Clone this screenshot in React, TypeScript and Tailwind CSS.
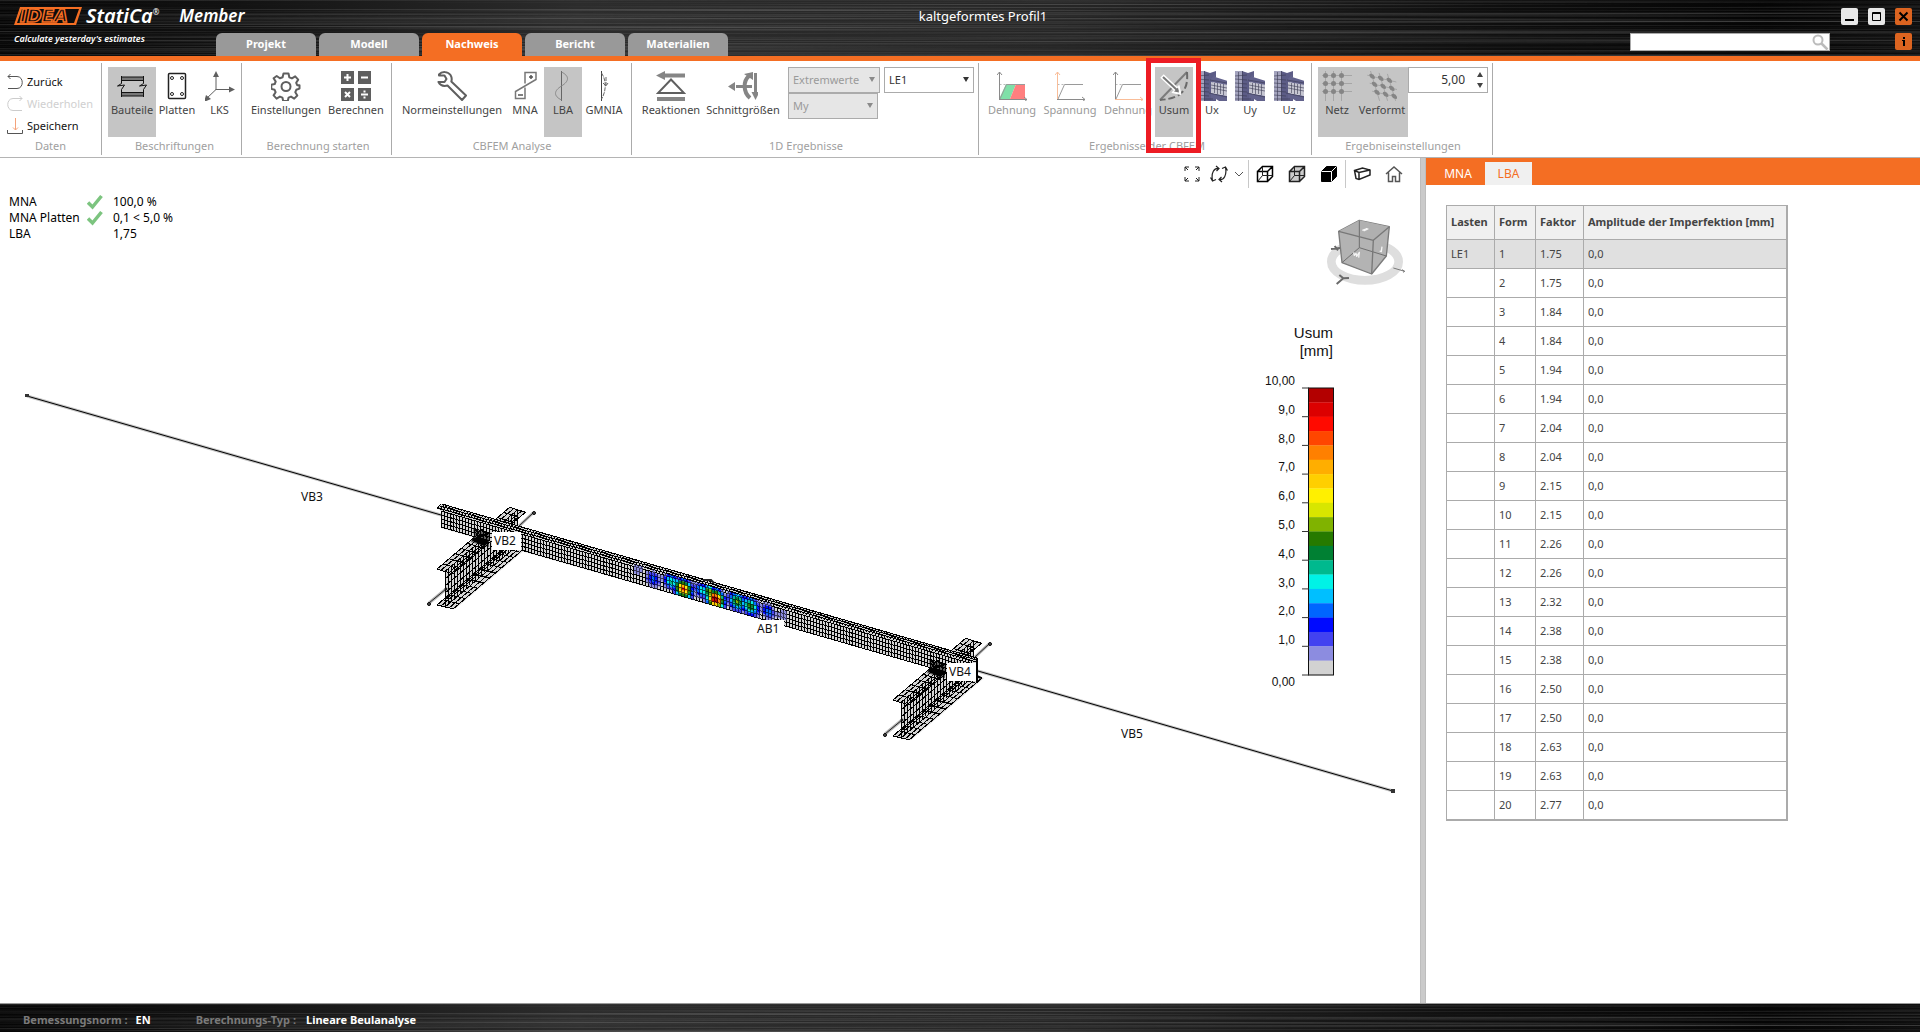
import React, { useState } from "react";

const tabs = ["Projekt", "Modell", "Nachweis", "Bericht", "Materialien"];

const palette = [
  "#b30000", "#dc0000", "#ff0a00", "#ff4600", "#ff8000", "#ffae00", "#ffcf00", "#fff000", "#d8e600", "#80b300",
  "#267a00", "#008033", "#00b98e", "#00f2e6", "#00bfff", "#0066ff", "#000aff", "#4242f0", "#8c8ce0", "#d2d2d2",
];

const ticks = ["10,00", "9,0", "8,0", "7,0", "6,0", "5,0", "4,0", "3,0", "2,0", "1,0", "0,00"];

const factors = [
  "1.75", "1.75", "1.84", "1.84", "1.94", "1.94", "2.04", "2.04", "2.15", "2.15",
  "2.26", "2.26", "2.32", "2.38", "2.38", "2.50", "2.50", "2.63", "2.63", "2.77",
];

// dark brushed metal behind the title and status bars
const Brushed = ({ id }: { id: string }) => (
  <svg aria-hidden="true" className="absolute inset-0 h-full w-full">
    <defs>
      <linearGradient id={`${id}-base`}>
        <stop offset="0" stopColor="#060606" />
        <stop offset="0.12" stopColor="#121212" />
        <stop offset="0.3" stopColor="#2c2c2c" />
        <stop offset="0.55" stopColor="#262626" />
        <stop offset="0.78" stopColor="#0e0e0e" />
        <stop offset="0.92" stopColor="#050505" />
        <stop offset="1" stopColor="#0e0e0e" />
      </linearGradient>
      <filter id={`${id}-grain`} x="0" y="0" width="100%" height="100%">
        <feTurbulence type="fractalNoise" baseFrequency="0.001 0.7" numOctaves="2" seed="4" />
        <feColorMatrix values="0 0 0 0 1  0 0 0 0 1  0 0 0 0 1  1.4 0 0 0 -0.6" />
      </filter>
    </defs>
    <rect width="100%" height="100%" fill={`url(#${id}-base)`} />
    <rect width="100%" height="100%" filter={`url(#${id}-grain)`} opacity="0.35" />
  </svg>
);

/* ---------- ribbon icons, all on a 30 x 30 grid ---------- */

const Icon = ({ children }: { children: React.ReactNode }) => (
  <svg width="30" height="30" viewBox="0 0 30 30" fill="none" stroke="#5f5f5f" className="shrink-0">
    {children}
  </svg>
);

const MemberIcon = () => (
  <Icon>
    <g stroke="#111">
      <path d="M4 7.500h23M4 23.500h23" stroke="#777" strokeWidth="3" />
      <path d="M4 6h23M4 9.500h23M4 21.500h23M4 25h23" />
      <path d="M4.500 5v7.500l-4 2.500 7-1-3 4.500V26M26.500 5v7.500l-4 2.500 7-1-3 4.500V26" />
    </g>
  </Icon>
);

const PlateIcon = () => (
  <Icon>
    <g stroke="#222">
      <rect x="6.500" y="2.500" width="17" height="25" rx="1" strokeWidth="1.500" fill="#fff" />
      {[[10, 7], [20, 7], [10, 23], [20, 23]].map(([x, y]) => (
        <circle key={`${x}-${y}`} cx={x} cy={y} r="1.500" />
      ))}
    </g>
  </Icon>
);

const AxesIcon = () => (
  <Icon>
    <path d="M11 19V3M11 18.500h18M11 18.500L1 28" />
    <path d="M11 0l3 6H8zM30 18.500l-6 3v-6zM-1 31l2-7 5 4z" fill="#5f5f5f" stroke="none" />
  </Icon>
);

const GearIcon = () => (
  <Icon>
    <path
      d="M12.500 2.500h5l.8 3.800 2.600 1.100 3.300-2.100 3 3.300-2 3.200 1 2.400h2.300v3.400l-3.200 1.200-1 2.400 2 3.300-3.100 3.100-3.200-2-2.400 1-.8 3.400h-4.600l-.8-3.400-2.500-1-3.300 2-3-3.200 2-3.200-1-2.400-3.300-.9v-4.100l3.400-.8 1-2.400-2.100-3.300L5.700 5l3.200 2.300 2.700-1.100z"
      strokeWidth="2"
      strokeLinejoin="round"
    />
    <circle cx="15" cy="15.500" r="4.500" strokeWidth="2" />
  </Icon>
);

const CalcIcon = () => (
  <Icon>
    <path d="M0 0h13v13H0zM17 0h13v13H17zM0 17h13v13H0zM17 17h13v13H17z" fill="#5f5f5f" stroke="none" />
    <path d="M3 6.500h7M6.500 3v7M20 6.500h7M4 21l5 5M9 21l-5 5M20 23.500h7M23.500 19.500v2M23.500 25.500v2" stroke="#fff" strokeWidth="2" />
  </Icon>
);

const WrenchIcon = () => (
  <Icon>
    <path
      d="M2 3.500C5 0 11 .5 13.500 4c1.500 2.500 1.500 4.500.8 6.500L29 24.500 25 29 10.500 14.500c-4 1-7.500-.5-9-3.500h6l2-3-2-3.500H2z"
      strokeWidth="2"
      strokeLinejoin="round"
    />
  </Icon>
);

const MnaIcon = () => (
  <Icon>
    <path d="M15 12.500v-11h11v7L5.500 20.500v7H15v-11" stroke="#777" strokeWidth="1.500" />
    <path d="M19 6h4M21 4v4M8 24h5" stroke="#555" strokeWidth="1.500" />
  </Icon>
);

const LbaIcon = () => (
  <Icon>
    <path d="M13.500 0v30" stroke="#666" />
    <path d="M13.500 1c8 4 8 9 0 14s-8 10 0 14" stroke="#8a8a8a" />
  </Icon>
);

const GmniaIcon = () => (
  <Icon>
    <path d="M12.500 0v30" stroke="#444" />
    <path d="M12.500 2c5 7 5 18 0 26M17 6v9M14 12l3 3 2-3" stroke="#666" strokeDasharray="4 1" />
  </Icon>
);

const ReactionIcon = () => (
  <Icon>
    <path d="M0 4.500L9 0v2.500h20v4H9V9zM1 26h28v4H1z" fill="#858585" stroke="none" />
    <path d="M15 8.500l13 13.500H2z" strokeWidth="2" />
  </Icon>
);

const ForcesIcon = () => (
  <Icon>
    <path d="M8 15.500h16M27.500 2v19" stroke="#858585" strokeWidth="3" />
    <path d="M22 27c-7-6-7-17-1-22" stroke="#858585" strokeWidth="4" />
    <path d="M0 15.500l7-4.500v9zM16 3l9-2v8zM23.500 21h8l-4 8z" fill="#858585" stroke="none" />
  </Icon>
);

const DiagramIcon = ({ fill, x, y }: { fill?: boolean; x: string; y: string }) => (
  <Icon>
    {fill && (
      <g stroke="none">
        <path d="M2 28L9 13h10l-6 15z" fill="#7fe0a8" />
        <path d="M13 28l6-15h9v15z" fill="#ff7f7f" />
      </g>
    )}
    <path d="M2.500 13.500H9" stroke="#bbb" strokeDasharray="2 2" />
    <path d="M3 28L9.500 13.500H28" stroke="#9a9a9a" />
    <path d="M2.500 29V1M0 4l2.500-3L5 4" stroke={y} />
    <path d="M2 28.500h28M27 26l3 2.500-3 2.500" stroke={x} />
  </Icon>
);

const UsumIcon = () => (
  <Icon>
    <path d="M1 29L28 1" stroke="#7c7c7c" strokeWidth="2" />
    <path d="M28 1c1 14-1 26-27 28" stroke="#6a6a6a" strokeWidth="2" strokeDasharray="7 3" />
    <path d="M3 5l16 15" stroke="#fff" strokeWidth="5" />
    <path d="M22 23.500l-9-2 7-7z" fill="#fff" stroke="#fff" />
    <path d="M4 6l15 14" stroke="#777" strokeWidth="2" />
    <path d="M20 21.500l-5-1 4-4z" fill="#777" stroke="none" />
  </Icon>
);

const MeshIcon = () => (
  <Icon>
    <path d="M0 0l8-1v31H0z" fill="#a3a3bd" stroke="none" />
    <path d="M7 0l6 2 6-2v6l-3 4v12l3 4v4H7z" fill="#5c5c86" stroke="none" />
    <path d="M14 8l5-6-1 4 13 4v5l-17-4zM14 22l17 3v5h-9l-3-2-5 2z" fill="#62628c" stroke="none" />
    <path d="M14 11l17 3v11l-17-3z" fill="#c6c6d2" stroke="none" />
    <path
      d="M0 5l12-1M0 8l12 1M0 12l12 1M0 16l12 1M0 20l12 1M0 24l12 1M0 28l16 0M3.500 1v29M7.500 0v30M17.500 12v10M20.500 12v11M23.500 13v10M26.500 13v11M14 14l16 3M14 17l16 3M13 9l17 3M12 22l18 4"
      stroke="#3b3b52"
      strokeWidth="0.600"
    />
  </Icon>
);

const NetIcon = ({ skew }: { skew?: boolean }) => (
  <Icon>
    <g transform={skew ? "skewX(17) skewY(14)" : undefined}>
      <path
        d={
          skew
            ? "M-1 4.500h27M-1 12.500h26M-1 20.500h26M3.500-1v30M11.500-1v28M19.500-2v27"
            : "M0 4.500h30M0 12.500h30M0 20.500h30M3.500 0v30M11.500 0v30M19.500 0v30"
        }
        stroke="#a6a6a6"
      />
      {[4.5, 12.5, 20.5].map((y) =>
        [3.5, 11.5, 19.5].map((x) => <circle key={`${x}-${y}`} cx={x} cy={y} r="2.500" fill="#858585" stroke="none" />)
      )}
    </g>
  </Icon>
);

/* ---------- ribbon building blocks ---------- */

interface ToolProps {
  label: string;
  width: string;
  icon: React.ReactNode;
  active?: boolean;
  faded?: boolean;
}

const Tool = ({ label, width, icon, active, faded }: ToolProps) => (
  <button
    className={`flex h-[70px] flex-col items-center pt-1 ${width} ${active ? "bg-[#c5c5c5]" : ""} ${
      faded ? "text-[#9a9a9a]" : "text-[#444]"
    }`}
  >
    {icon}
    <span className="whitespace-nowrap leading-[18px]">{label}</span>
  </button>
);

const Group = ({ label, pad, children }: { label: string; pad: string; children: React.ReactNode }) => (
  <section className={`my-0.5 flex shrink-0 flex-col border-r border-[#ababab] pt-1 ${pad}`}>
    <div className="flex h-[70px]">{children}</div>
    <div className="text-center leading-[18px] whitespace-nowrap text-[#a0a0a0]">{label}</div>
  </section>
);

const Choice = ({ label, value, width, disabled }: { label: string; value: string; width: string; disabled?: boolean }) => (
  <div className={`relative h-[26px] ${width}`}>
    <select
      aria-label={label}
      disabled={disabled}
      className={`h-full w-full appearance-none border border-[#ababab] pl-1 ${
        disabled ? "bg-[#e6e6e6] text-[#9a9a9a]" : "bg-white text-[#333]"
      }`}
    >
      <option>{value}</option>
    </select>
    <svg width="6" height="5" viewBox="0 0 6 5" className="pointer-events-none absolute top-[10px] right-[5px]">
      <path d="M0 0h6L3 5z" fill={disabled ? "#8a8a8a" : "#333"} />
    </svg>
  </div>
);

/* ---------- 3D model ---------- */

const beamTop = (x: number) => 504 + 0.288 * (x - 442);

// buckling waves of the web: x, depth below the top edge, height, spread
const waves = [
  [637, 8, 0.1, 5],
  [653, 14, 0.24, 6],
  [671, 11, 0.38, 6],
  [683, 15, 0.85, 7],
  [702, 11, 0.35, 6],
  [709, 10, 0.55, 5],
  [715, 16, 1.05, 7],
  [737, 12, 0.52, 7],
  [750, 13, 0.48, 7],
  [768, 13, 0.24, 6],
  [783, 13, 0.1, 5],
];

const buildCells = () => {
  const cells: { d: string; fill: string }[] = [];
  for (let x = 628; x < 792; x += 3) {
    for (let t = 5; t < 23; t += 3) {
      let u = 0;
      waves.forEach(([cx, ct, a, s]) => {
        const r = ((x + 1 - cx) ** 2 + (t + 1 - ct) ** 2) / (s * s);
        u = Math.max(u, a * Math.exp(-r * 0.8));
      });
      const step = Math.min(19, Math.floor(u * 20));
      if (step > 0) {
        const y = beamTop(x) + t;
        cells.push({ d: `M${x} ${y}l3 1v3l-3-1z`, fill: palette[19 - step] });
      }
    }
  }
  return cells;
};

const cells = buildCells();

const buildBeamMesh = () => {
  let d = "";
  [0, 2, 4, 7, 11, 15, 19, 23].forEach((t) => {
    d += `M${t < 5 ? 442 - t : 441} ${504 + t}L977 ${beamTop(977) + t}`;
  });
  for (let x = 441; x <= 977; x += 3) {
    d += `M${x} ${beamTop(x) + 7}v16`;
    d += `M${x} ${beamTop(x)}l-4 5`;
  }
  return d;
};

const buildGirderMesh = () => {
  let d = "";
  for (let i = 0; i <= 24; i++) {
    const x = i * 3;
    const y = -i * 2.58;
    d += `M${445 + x} ${572 + y}v34`;
    if (i % 2 === 0) {
      d += `M${437 + x} ${569 + y}l16 5`;
      d += `M${437 + x} ${605 + y}l17 4`;
    }
  }
  [0, 4, 8, 12, 16].forEach((o) => {
    d += `M${437 + o} ${569 + o * 0.3}l73-62`;
    d += `M${437 + o} ${605 + o * 0.25}l73-62`;
  });
  [7, 14, 21, 28].forEach((o) => {
    d += `M445 ${572 + o}l73-62`;
  });
  return d;
};

const beamMesh = buildBeamMesh();
const girderMesh = buildGirderMesh();

const Girder = ({ move }: { move?: string }) => (
  <g transform={move}>
    <path d="M429 603l17-14M519 526l14-13" stroke="#b4b4b4" strokeWidth="3" />
    <path d="M429 603l17-14M519 526l14-13" stroke="#222" />
    <path d="M437 605l73-62 18 4-73 62z" fill="#d4d4d4" />
    <path d="M445 572l73-62v34l-73 62z" fill="#d4d4d4" />
    <path d="M437 569l73-62 16 5-73 62z" fill="#d4d4d4" />
    <path d={girderMesh} stroke="#000" shapeRendering="crispEdges" />
    <g fill="#555" stroke="#000">
      <circle cx="429" cy="604" r="1.500" />
      <circle cx="446" cy="589" r="1" />
      <circle cx="534" cy="513" r="1.500" />
    </g>
  </g>
);

const Joint = ({ move }: { move?: string }) => (
  <g transform={move}>
    <path d="M473 529l16 4v14l-5-1-13-4 3-6z" fill="#000" fillOpacity="0.550" />
    <path d="M471 540l6-3 12 3-5 6z" fill="#000" />
    <path d="M474 529l4 3 4-2 5 4 3-2M476 534l4 3 5-2 3 3" stroke="#000" strokeWidth="2" shapeRendering="crispEdges" />
  </g>
);

const NavCube = () => (
  <g transform="translate(1150 150) scale(0.33333)" strokeLinejoin="round">
    <ellipse cx="645" cy="335" rx="101" ry="56" stroke="#dedede" strokeWidth="26" />
    <path d="M566 244l62-33 90 19-9 88-44 54-89-34z" fill="#b3b3b3" stroke="#7b7b7b" strokeWidth="4" />
    <path d="M566 244l104 27 48-41-90-19z" fill="#b0b0b0" />
    <path d="M628 211v82l-52 45M628 293l81 25" stroke="#6e6e6e" strokeWidth="3" />
    <path d="M566 244l104 27 48-41M670 271l-5 101" stroke="#787878" strokeWidth="4" />
    <path d="M637 241l14-5M641 243l14-7M611 307l2 9 5-6 2 9 8-12-2 16M696 290l-2 15-5-2" stroke="#f4f4f4" strokeWidth="4" />
    <path d="M543 297l27-3M554 288l10 13M568 375l12 10 17-1M580 385l-20 17" stroke="#6a6a6a" strokeWidth="6" />
    <path d="M730 354l34 10M756 359l8 5-5 3" stroke="#777" strokeWidth="3" />
  </g>
);

const Legend = () => (
  <g fontFamily="Liberation Sans, Arial, sans-serif" fill="#111" textAnchor="end">
    <text x="1333" y="338" fontSize="15">Usum</text>
    <text x="1333" y="356" fontSize="15">[mm]</text>
    {palette.map((c, i) => (
      <rect key={c} x="1309" y={388 + i * 14.35} width="24" height="14.6" fill={c} />
    ))}
    <rect x="1308.5" y="388" width="25" height="287" fill="none" stroke="#111" />
    {ticks.map((t, i) => (
      <g key={t}>
        <path d={`M1302 ${388 + i * 28.7}h7`} stroke="#333" />
        <text x="1295" y={i === 10 ? 686 : 385 + i * 28.8} fontSize="12">{t}</text>
      </g>
    ))}
  </g>
);

const Model = () => (
  <svg viewBox="0 158 1420 845" fill="none" className="absolute inset-0 h-full w-full">
    <path d="M27 396L441 515M978 671L1393 791" stroke="#c4c4c4" strokeWidth="3" />
    <path d="M27 396L441 515M978 671L1393 791" stroke="#000" />
    <path d="M25 394h4v3h-4zM1391 789h4v4h-4z" fill="#333" />
    <Girder />
    <Girder move="translate(456 131)" />
    <path d="M442 504L977 658v23L441 528v-17l-4-3z" fill="#d4d4d4" />
    {cells.map((c) => (
      <path key={c.d} d={c.d} fill={c.fill} />
    ))}
    <path d={beamMesh} stroke="#000" shapeRendering="crispEdges" />
    {/* the crests stay readable through the mesh */}
    <g fillOpacity="0.400">
      {cells.map((c) => (
        <path key={c.d} d={c.d} fill={c.fill} />
      ))}
    </g>
    <path d="M703 580l8 0 3 3" stroke="#222" strokeWidth="2" />
    <Joint />
    <Joint move="translate(456 131)" />
    <path d="M977 658v25M977 676l4 2" stroke="#000" strokeWidth="2" />
    <path d="M492 532h29v18h-29zM755 620h29v17h-29zM947 663h29v18h-29z" fill="#fff" />
    <g fill="#111" fontFamily="Noto Sans, sans-serif" fontSize="12">
      <text x="301" y="501">VB3</text>
      <text x="494" y="545">VB2</text>
      <text x="757" y="633">AB1</text>
      <text x="949" y="676">VB4</text>
      <text x="1121" y="738">VB5</text>
    </g>
    <NavCube />
    <Legend />
  </svg>
);

/* ---------- view toolbar ---------- */

const ViewButton = ({ label, children }: { label: string; children: React.ReactNode }) => (
  <button aria-label={label} className="flex h-7 w-8 items-center justify-center">
    <svg width="18" height="18" viewBox="0 0 18 18" fill="none" stroke="#222">
      {children}
    </svg>
  </button>
);

const cube = "M1.500 6.500h10v10h-10zM1.500 6.500l5-5h10v10l-5 5M11.500 6.500l5-5";

const ViewBar = () => (
  <div className="relative flex h-8 items-center justify-end pr-2.5">
    <ViewButton label="Zoom">
      <path d="M2 6V2h4M2 2l3 3M12 2h4v4M16 2l-3 3M2 12v4h4M2 16l3-3M16 12v4h-4M16 16l-3-3" />
    </ViewButton>
    <button aria-label="Drehen" className="flex h-7 w-9 items-center justify-between pl-0.5">
      <svg width="18" height="18" viewBox="0 0 18 18" fill="none" stroke="#222" strokeWidth="1.200">
        <path d="M9 3.500C4 2.500 1 8 2.500 15.500M.5 12.500l2 3.500 3.500-1.500M6 1l3 2.500L6.500 6M9 14.500c5 1 8-4.500 6.500-12M12 3.500L15.500 2 17.500 5.500M11.500 12L9 14.500l3 2.500" />
      </svg>
      <svg width="10" height="10" viewBox="0 0 10 10" fill="none" stroke="#555">
        <path d="M1 3l4 4 4-4" />
      </svg>
    </button>
    <span className="ml-1 h-7 w-px bg-[#c8c8c8]" />
    <ViewButton label="Drahtmodell">
      <path d={cube} stroke="#000" strokeWidth="1.500" />
      <path d="M6.500 2v8.500h10M6.500 10.500l-5 6" />
    </ViewButton>
    <ViewButton label="Transparent">
      <path d="M1.500 6.500l5-5h10v10l-5 5h-10z" fill="#ccc" />
      <path d={cube} stroke="#222" strokeWidth="1.500" />
      <path d="M6.500 2v8.500h10M6.500 10.500l-5 6" />
    </ViewButton>
    <ViewButton label="Volumenkörper">
      <path d="M1.500 6.500l5-5h10v10l-5 5h-10z" fill="#000" stroke="#000" />
      <path d="M1.500 6.500h10v10M11.500 6.500l5-5" stroke="#fff" />
    </ViewButton>
    <span className="h-7 w-px bg-[#c8c8c8]" />
    <ViewButton label="Ansicht">
      <path d="M1.500 5.500l8-2.500 7.500 2v5l-11 4.500-3-1zM1.500 5.500l4.500 2 11-2.500M6 7.500v7" strokeWidth="1.500" />
    </ViewButton>
    <ViewButton label="Startansicht">
      <path d="M1 9l8-7 8 7M3.500 7.500v9h4v-5h3v5h4v-9" stroke="#555" strokeWidth="1.500" />
    </ViewButton>
  </div>
);

const Check = () => (
  <svg width="16" height="16" viewBox="0 0 16 16" fill="none">
    <path d="M1 8.500l4.500 4.500L14.500 2" stroke="#7cc47f" strokeWidth="3.500" />
  </svg>
);

/* ---------- page ---------- */

const App: React.FC = () => {
  const [tab, setTab] = useState("Nachweis");

  return (
    <div className="flex h-screen flex-col overflow-hidden bg-white font-['Noto_Sans',sans-serif] text-[12px] text-[#222]">
      {/* Title bar */}
      <header className="relative flex shrink-0 border-b-[5px] border-[#f46e23]">
        <Brushed id="title" />
        <div className="relative w-[216px] shrink-0 pl-[14px] whitespace-nowrap text-white italic">
          <div className="flex h-8 items-center">
            <svg width="68" height="20" viewBox="0 0 68 20" className="shrink-0">
              <path d="M6 1h62l-6 18H0z" fill="#f46e23" />
              <path d="M8 3h57l-5 14H3z" fill="#0c0c0c" />
              <text x="6" y="16" fontSize="18" fontWeight="700" fontFamily="DejaVu Sans, sans-serif" fill="#0c0c0c" stroke="#f46e23" strokeWidth="1.500">
                IDEA
              </text>
            </svg>
            <span className="ml-1 text-[20px] font-semibold">StatiCa</span>
            <sup className="text-[8px]">®</sup>
            <span className="ml-5 text-[17px] font-semibold">Member</span>
          </div>
          <div className="text-[9px] leading-[14px] font-semibold">Calculate yesterday's estimates</div>
        </div>

        <div className="relative flex min-w-0 flex-1 flex-col">
          <div className="flex h-[33px] items-center">
            <h1 className="flex-1 text-center text-[13px] text-white">kaltgeformtes Profil1</h1>
            <div className="flex w-[170px] justify-end gap-2.5 pr-2">
              <button aria-label="Minimieren" className="h-[17px] w-[17px] rounded-xs bg-[#e8e8e8]">
                <svg viewBox="0 0 17 17"><path d="M4 11h9v2H4z" /></svg>
              </button>
              <button aria-label="Maximieren" className="h-[17px] w-[17px] rounded-xs bg-[#e8e8e8]">
                <svg viewBox="0 0 17 17" fill="none" stroke="#000"><path d="M4.500 4.500h8v8h-8zM4 5.500h9" /></svg>
              </button>
              <button aria-label="Schließen" className="h-[17px] w-[17px] rounded-xs bg-[#dc6420]">
                <svg viewBox="0 0 17 17" stroke="#000" strokeWidth="2"><path d="M4.500 4.500l8 8M12.500 4.500l-8 8" /></svg>
              </button>
            </div>
          </div>
          <div className="flex h-[23px]">
            <nav className="flex gap-[3px] text-[11px]">
              {tabs.map((name) => (
                <button
                  key={name}
                  onClick={() => setTab(name)}
                  className={`w-[100px] rounded-t-md font-bold text-white ${tab === name ? "bg-[#f46e23]" : "bg-[#999]"}`}
                >
                  {name}
                </button>
              ))}
            </nav>
            <div className="relative ml-auto h-[18px] w-[200px]">
              <input aria-label="Suchen" type="search" className="h-full w-full border border-[#aaa] bg-white px-1" />
              <svg width="17" height="17" viewBox="0 0 17 17" fill="none" stroke="#bcbcbc" className="absolute top-px right-px">
                <circle cx="6" cy="6" r="4.500" strokeWidth="2" />
                <path d="M9.500 9.500l6 6" strokeWidth="2.500" />
              </svg>
            </div>
            <button aria-label="Info" className="mr-2 ml-[65px] h-[17px] w-[17px] rounded-xs bg-[#dc6420]">
              <svg viewBox="0 0 17 17"><path d="M8 4h2v2H8zM7 7h3v6H8V8H7z" /></svg>
            </button>
          </div>
        </div>
      </header>

      {/* Ribbon */}
      <div className="flex shrink-0 border-b border-[#b4b4b4] text-[11px]">
        <section className="my-0.5 flex w-[102px] shrink-0 flex-col border-r border-[#ababab] pt-1 text-[#111]">
          <div className="flex h-[70px] flex-col pt-1 pl-[7px]">
            <button className="flex h-[22px] items-center gap-1">
              <svg width="16" height="16" viewBox="0 0 16 16" fill="none" stroke="#555">
                <path d="M1 2.500h9c7 0 7 12 0 12H1M3.500 0L1 2.500 3.500 5" />
              </svg>
              Zurück
            </button>
            <button disabled className="flex h-[22px] items-center gap-1 text-[#d0d0d0]">
              <svg width="16" height="16" viewBox="0 0 16 16" fill="none" stroke="#ccc">
                <path d="M15 2.500H6c-7 0-7 12 0 12h9M12.500 0L15 2.500 12.500 5" />
              </svg>
              Wiederholen
            </button>
            <button className="flex h-[22px] items-center gap-1">
              <svg width="16" height="16" viewBox="0 0 16 16" fill="none" stroke="#555">
                <path d="M.5 12v3.500h15V12" />
                <path d="M8.500 0v12M6 9.500l2.500 2.500L11 9.500" stroke="#f4a27a" />
              </svg>
              Speichern
            </button>
          </div>
          <div className="text-center leading-[18px] text-[#a0a0a0]">Daten</div>
        </section>

        <Group label="Beschriftungen" pad="pl-1.5">
          <Tool label="Bauteile" width="w-12" icon={<MemberIcon />} active />
          <Tool label="Platten" width="w-[42px]" icon={<PlateIcon />} />
          <Tool label="LKS" width="w-[43px]" icon={<AxesIcon />} />
        </Group>

        <Group label="Berechnung starten" pad="pl-1.5 pr-[3px]">
          <Tool label="Einstellungen" width="w-[76px]" icon={<GearIcon />} />
          <Tool label="Berechnen" width="w-16" icon={<CalcIcon />} />
        </Group>

        <Group label="CBFEM Analyse" pad="pl-1.5 pr-[5px]">
          <Tool label="Normeinstellungen" width="w-[108px]" icon={<WrenchIcon />} />
          <Tool label="MNA" width="w-[38px]" icon={<MnaIcon />} />
          <Tool label="LBA" width="w-[38px]" icon={<LbaIcon />} active />
          <Tool label="GMNIA" width="w-11" icon={<GmniaIcon />} />
        </Group>

        <Group label="1D Ergebnisse" pad="pl-1.5 pr-1">
          <Tool label="Reaktionen" width="w-[66px]" icon={<ReactionIcon />} />
          <Tool label="Schnittgrößen" width="w-[78px]" icon={<ForcesIcon />} />
          <div className="ml-1.5 flex gap-1">
            <div>
              <Choice label="Auswertung" value="Extremwerte" width="w-[92px]" disabled />
              <Choice label="Schnittgröße" value="My" width="w-[90px]" disabled />
            </div>
            <Choice label="Lastfall" value="LE1" width="w-[90px]" />
          </div>
        </Group>

        <Group label="Ergebnisse der CBFEM" pad="pl-1.5 pr-0.5">
          <Tool label="Dehnung" width="w-[54px]" icon={<DiagramIcon fill x="#8a8a8a" y="#8a8a8a" />} faded />
          <Tool label="Spannung" width="w-[62px]" icon={<DiagramIcon x="#8a8a8a" y="#f9bd98" />} faded />
          <Tool label="Dehnung" width="w-[54px]" icon={<DiagramIcon x="#f9bd98" y="#8a8a8a" />} faded />
          <div className="relative">
            <Tool label="Usum" width="w-[38px]" icon={<UsumIcon />} active />
            <div className="pointer-events-none absolute -top-[9px] -left-[9px] z-10 h-[95px] w-[55px] border-[5px] border-[#ed1c24]" />
          </div>
          <Tool label="Ux" width="w-[38px]" icon={<MeshIcon />} />
          <Tool label="Uy" width="w-[38px]" icon={<MeshIcon />} />
          <Tool label="Uz" width="w-10" icon={<MeshIcon />} />
        </Group>

        <Group label="Ergebniseinstellungen" pad="pl-1.5 pr-1">
          <Tool label="Netz" width="w-[38px]" icon={<NetIcon />} active />
          <Tool label="Verformt" width="w-[52px]" icon={<NetIcon skew />} active />
          <div className="flex h-[26px] w-20 items-center border border-[#ababab] pr-1">
            <input
              aria-label="Verformungsfaktor"
              defaultValue="5,00"
              className="w-full min-w-0 pr-3 text-right text-[12px] text-[#333]"
            />
            <div className="flex flex-col gap-1.5">
              <button aria-label="Mehr">
                <svg width="6" height="5" viewBox="0 0 6 5"><path d="M0 5h6L3 0z" fill="#444" /></svg>
              </button>
              <button aria-label="Weniger">
                <svg width="6" height="5" viewBox="0 0 6 5"><path d="M0 0h6L3 5z" fill="#444" /></svg>
              </button>
            </div>
          </div>
        </Group>
      </div>

      {/* Work area */}
      <main className="flex min-h-0 flex-1">
        <div className="relative min-w-0 flex-1">
          <Model />
          <ViewBar />
          <div className="relative mt-1 grid w-fit grid-cols-[78px_26px_auto] pl-[9px] leading-4 whitespace-nowrap text-black">
            <span>MNA</span>
            <Check />
            <span>100,0 %</span>
            <span>MNA Platten</span>
            <Check />
            <span>0,1 &lt; 5,0 %</span>
            <span>LBA</span>
            <span />
            <span>1,75</span>
          </div>
        </div>

        <div className="w-1.5 shrink-0 border-x border-[#bdbdbd] bg-[#cacaca]" />

        <aside className="w-[494px] shrink-0">
          <div className="flex h-[27px] items-end bg-[#f46e23]">
            <button className="ml-[5px] h-[23px] w-[54px] text-white">MNA</button>
            <button className="h-[23px] w-[47px] bg-[#f0f0f0] text-[#f46e23]">LBA</button>
          </div>
          <table className="mt-5 ml-5 table-fixed border-collapse border border-r-2 border-b-2 border-[#ababab] text-left text-[11px] text-[#444]">
            <thead>
              <tr className="h-[34px] bg-[#f0f0f0]">
                <th className="w-12 border border-[#ababab] pl-1">Lasten</th>
                <th className="w-[41px] border border-[#ababab] pl-1">Form</th>
                <th className="w-12 border border-[#ababab] pl-1">Faktor</th>
                <th className="w-[203px] border border-[#ababab] pl-1 whitespace-nowrap">Amplitude der Imperfektion [mm]</th>
              </tr>
            </thead>
            <tbody>
              {factors.map((factor, i) => (
                <tr key={i} className={`h-[29px] ${i === 0 ? "bg-[#e0e0e0]" : ""}`}>
                  <td className="border border-[#ababab] pl-1">{i === 0 ? "LE1" : ""}</td>
                  <td className="border border-[#ababab] pl-1">{i + 1}</td>
                  <td className="border border-[#ababab] pl-1">{factor}</td>
                  <td className="border border-[#ababab] pl-1">0,0</td>
                </tr>
              ))}
            </tbody>
          </table>
        </aside>
      </main>

      {/* Status bar */}
      <footer className="relative h-[29px] shrink-0 border-t border-[#999] text-[11px] font-bold text-[#7a7a7a]">
        <Brushed id="status" />
        <div className="relative flex h-full items-center pt-1 pl-[23px]">
          <span>Bemessungsnorm :</span>
          <span className="ml-2 text-white">EN</span>
          <span className="ml-[45px]">Berechnungs-Typ :</span>
          <span className="ml-2.5 text-white">Lineare Beulanalyse</span>
        </div>
      </footer>
    </div>
  );
};

export default App;
